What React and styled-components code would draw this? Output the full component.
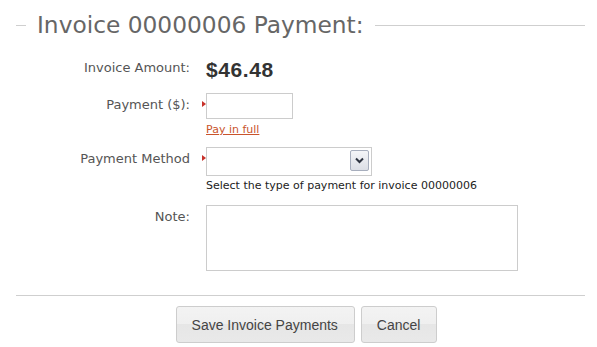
import React from "react";
import styled, { createGlobalStyle } from "styled-components";

const GlobalStyle = createGlobalStyle`
  body {
    margin: 0;
    background: #fff;
    font-family: "DejaVu Sans", sans-serif;
  }
`;

const Page = styled.div`
  padding: 10px 12px 0 16px;
`;

const Fieldset = styled.fieldset`
  margin: 0;
  padding: 0;
  min-width: 0;
  border: none;
  border-top: 1px solid #cfcfcf;
`;

const Legend = styled.legend`
  margin-left: 10px;
  padding: 0 11px;
  font-family: "DejaVu Sans", sans-serif;
  font-size: 23.3px;
  line-height: 30px;
  color: #666;
`;

const Row = styled.div`
  display: flex;
  align-items: flex-start;
  margin-top: ${(p) => p.$gap}px;
`;

const Label = styled.label`
  flex: none;
  width: 174px;
  padding-top: ${(p) => p.$top || 0}px;
  text-align: right;
  font-size: 13px;
  line-height: 16px;
  color: #555;
`;

const Field = styled.div`
  position: relative;
  margin-left: 16px;
  display: flex;
  flex-direction: column;
  align-items: flex-start;

  ${(p) =>
    p.$required &&
    `
    &::before {
      content: "";
      position: absolute;
      left: -4px;
      top: 8px;
      border-left: 4px solid #c8312a;
      border-top: 3px solid transparent;
      border-bottom: 3px solid transparent;
    }
  `}
`;

const Amount = styled.div`
  margin-top: -1px;
  font-family: "Liberation Sans", Arial, sans-serif;
  font-weight: bold;
  font-size: 21px;
  line-height: 24px;
  letter-spacing: 0.6px;
  color: #333;
`;

const TextInput = styled.input`
  box-sizing: border-box;
  width: 87px;
  height: 26px;
  margin: 0;
  border: 1px solid #ccc;
  padding: 2px 4px;
  font: 13px "DejaVu Sans", sans-serif;
`;

const PayLink = styled.a`
  margin-top: 4px;
  font-size: 11px;
  line-height: 14px;
  color: #c9542c;
  text-decoration: underline;
  cursor: pointer;
`;

const SelectBox = styled.div`
  position: relative;
  width: 166px;
  height: 29px;
`;

const Select = styled.select`
  box-sizing: border-box;
  width: 100%;
  height: 100%;
  margin: 0;
  border: 1px solid #ccc;
  background: #fff;
  appearance: none;
  font: 13px "DejaVu Sans", sans-serif;
`;

const DropButton = styled.span`
  position: absolute;
  right: 3px;
  top: 3px;
  box-sizing: border-box;
  width: 19px;
  height: 21px;
  border: 1px solid #a7aebd;
  border-radius: 2px;
  background: linear-gradient(#f4f5f8, #dcdfe6);
  display: flex;
  align-items: center;
  justify-content: center;
  pointer-events: none;
`;

const Help = styled.div`
  margin-top: 3px;
  font-size: 11px;
  line-height: 14px;
  color: #222;
`;

const NoteArea = styled.textarea`
  box-sizing: border-box;
  width: 312px;
  height: 66px;
  margin: 0;
  border: 1px solid #ccc;
  resize: none;
  font: 13px "DejaVu Sans", sans-serif;
`;

const ButtonBar = styled.div`
  margin-top: 24px;
  border-top: 1px solid #cfcfcf;
  padding: 10px 0 0 12px;
  display: flex;
  justify-content: center;
  gap: 6px;
`;

const Button = styled.button`
  height: 37px;
  padding: 0 16px 0 15px;
  border: 1px solid #cdcdcd;
  border-radius: 3px;
  background: linear-gradient(#f3f3f3 0%, #efefef 50%, #e6e6e6 50%, #e9e9e9 100%);
  font-family: "Liberation Sans", Arial, sans-serif;
  font-size: 14px;
  color: #444;
  cursor: pointer;
`;

const Chevron = () => (
  <svg width="9" height="7" viewBox="0 0 9 7">
    <path d="M1 1.5 L4.5 5 L8 1.5" fill="none" stroke="#2d3340" strokeWidth="2" />
  </svg>
);

export default function App() {
  return (
    <Page>
      <GlobalStyle />
      <Fieldset>
        <Legend>Invoice 00000006 Payment:</Legend>

        <Row $gap={19}>
          <Label $top={1}>Invoice Amount:</Label>
          <Field>
            <Amount>$46.48</Amount>
          </Field>
        </Row>

        <Row $gap={11}>
          <Label $top={4}>Payment ($):</Label>
          <Field $required>
            <TextInput type="text" />
            <PayLink>Pay in full</PayLink>
          </Field>
        </Row>

        <Row $gap={10}>
          <Label $top={4}>Payment Method</Label>
          <Field $required>
            <SelectBox>
              <Select>
                <option value="" />
              </Select>
              <DropButton>
                <Chevron />
              </DropButton>
            </SelectBox>
            <Help>Select the type of payment for invoice 00000006</Help>
          </Field>
        </Row>

        <Row $gap={12}>
          <Label $top={4}>Note:</Label>
          <Field>
            <NoteArea />
          </Field>
        </Row>

        <ButtonBar>
          <Button type="button">Save Invoice Payments</Button>
          <Button type="button">Cancel</Button>
        </ButtonBar>
      </Fieldset>
    </Page>
  );
}
